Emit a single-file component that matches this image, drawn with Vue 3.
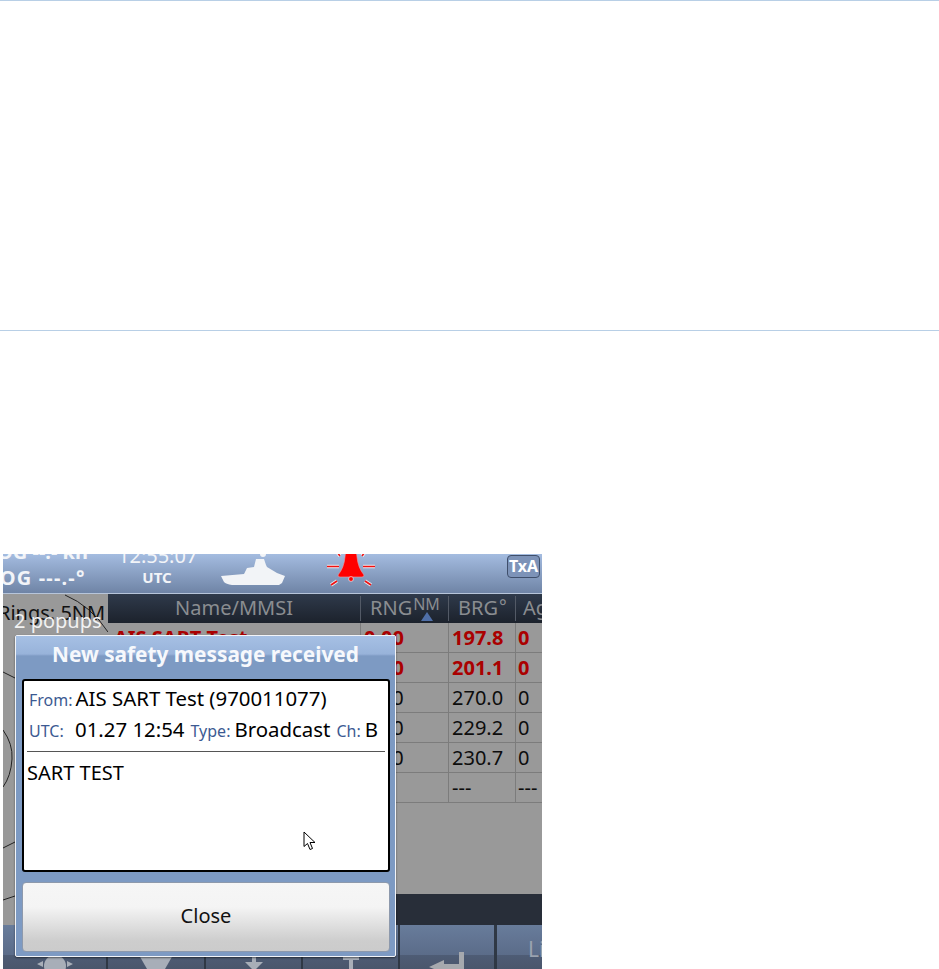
<script setup>
const rows = [
  { rng: '0.00', brg: '197.8', age: '0', alert: true },
  { rng: '0.00', brg: '201.1', age: '0', alert: true },
  { rng: '0.00', brg: '270.0', age: '0' },
  { rng: '0.00', brg: '229.2', age: '0' },
  { rng: '0.00', brg: '230.7', age: '0' },
  { rng: '', brg: '---', age: '---' },
]
</script>

<template>
  <div class="page">
    <section class="blank"></section>
    <section class="shot">
      <div class="device">
        <header class="topbar">
          <div class="nav">
            <div>SOG --.- kn</div>
            <div class="cog">COG ---.-°</div>
          </div>
          <div class="clock">
            <div class="time">12:55:07</div>
            <div class="utc">UTC</div>
          </div>
          <svg class="ship" width="64" height="40" viewBox="0 0 64 40">
            <path d="M0 23 L23 21 L26 15 L33 14 L35 6 L43 6 L45 12 L46 14 L56 20 L64 23 L61 30 L58 32 L11 32 Q5 31 3 29 Z" fill="#f2f4f7"/>
            <circle cx="42" cy="1" r="3" fill="#f2f4f7"/>
          </svg>
          <svg class="bell" width="52" height="40" viewBox="0 0 52 40">
            <g stroke="#fff" stroke-width="3.4" opacity=".8">
              <path d="M2 13.500H14M38 13.500H50M6 32L12 28M46 32L40 28M12 -1L15 3M40 -1L37 3"/>
            </g>
            <g stroke="#f01010" stroke-width="1.600">
              <path d="M2 13.500H14M38 13.500H50M6 32L12 28M46 32L40 28M12 -1L15 3M40 -1L37 3"/>
            </g>
            <path d="M20 4 Q20 -2 26 -2 Q32 -2 32 4 Q33 15 39 22 Q39 24 37 24 L15 24 Q13 24 13 22 Q19 15 20 4 Z" fill="#ff0000" stroke="#e8a0a8" stroke-width=".6"/>
            <circle cx="26" cy="26" r="2.400" fill="#ff0000" stroke="#fff" stroke-width=".6"/>
          </svg>
          <div class="txa">TxA</div>
        </header>

        <div class="middle">
          <div class="map">
            <svg class="map-lines" width="105" height="331" viewBox="0 0 105 331" fill="none" stroke="#222" stroke-width="1">
              <path d="M62 1 Q88 12 105 38"/>
              <path d="M0 78 L12 84"/>
              <path d="M0 136 Q10 150 9 165 Q8 182 0 193"/>
              <path d="M0 254 L12 248"/>
              <path d="M0 306 L12 302"/>
            </svg>
            <div class="rings">Rings: 5NM</div>
          </div>
          <div class="list">
            <div class="thead">
              <div class="c-name">Name/MMSI</div>
              <div class="c-rng">RNG<span class="unit">NM</span><i class="sort"></i></div>
              <div class="c-brg">BRG<span class="deg">°</span></div>
              <div class="c-age">Age</div>
            </div>
            <div v-for="(r, i) in rows" :key="i" class="tr" :class="{ alert: r.alert }">
              <div class="c-name">{{ i === 0 ? 'AIS SART Test' : '' }}</div>
              <div class="c-rng">{{ r.rng }}</div>
              <div class="c-brg">{{ r.brg }}</div>
              <div class="c-age">{{ r.age }}</div>
            </div>
            <div class="rest"></div>
            <div class="darkbar"></div>
          </div>
        </div>

        <div class="toolbar">
          <div class="tool t1">
            <svg width="60" height="22" viewBox="0 0 60 22" fill="#a8aeb8"><circle cx="30" cy="19" r="11"/><path d="M12 17L18 14V20ZM48 17L42 14V20Z"/></svg>
          </div>
          <div class="tool t2">
            <svg width="50" height="22" viewBox="0 0 50 22" fill="#a8aeb8"><path d="M8 8Q25 2 42 8L34 22H16Z"/></svg>
          </div>
          <div class="tool t3">
            <svg width="30" height="22" viewBox="0 0 30 22" fill="#a8aeb8"><path d="M13 2H17V15H24L15 24L6 15H13Z"/></svg>
          </div>
          <div class="tool t4">
            <svg width="30" height="22" viewBox="0 0 30 22" fill="#a8aeb8"><path d="M7 10Q15 8 23 10V13H17V22H13V13H7Z"/></svg>
          </div>
          <div class="tool t5">
            <svg width="48" height="24" viewBox="0 0 48 24" fill="#a6a9ae"><path d="M36 7H41V24H21V28L6 22L21 15V19H36Z"/></svg>
          </div>
          <div class="tool t6">Li</div>
        </div>

        <div class="popups">2 popups</div>

        <div class="dialog">
          <div class="dialog-title">New safety message received</div>
          <div class="msg">
            <div class="msg-row first">
              <span class="lbl from-l">From:</span><span class="val">AIS SART Test (970011077)</span>
            </div>
            <div class="msg-row second">
              <span class="lbl utc-l">UTC:</span><span class="val">01.27 12:54</span>
              <span class="lbl">Type:</span><span class="val">Broadcast</span>
              <span class="lbl">Ch:</span><span class="val">B</span>
            </div>
            <div class="msg-body">SART TEST</div>
            <svg class="cursor" width="14" height="20" viewBox="0 0 14 20">
              <path d="M1 1V15.500L4.500 12.500L7 18.500L9.500 17.500L7 11.500H12Z" fill="#fff" stroke="#000" stroke-width="1"/>
            </svg>
          </div>
          <div class="close-btn">Close</div>
        </div>
      </div>
    </section>
  </div>
</template>

<style scoped>
.page {
  height: 969px;
  overflow: hidden;
  background: #fff;
  font-family: "Noto Sans", "Open Sans", sans-serif;
}
.blank {
  height: 330px;
  box-sizing: border-box;
  border-top: 1px solid #b8cfe6;
}
.shot {
  border-top: 1px solid #b8cfe6;
  padding: 223px 0 0 3px;
}
.device {
  position: relative;
  width: 539px;
  height: 415px;
  overflow: hidden;
  background: #999;
}
.topbar {
  height: 39px;
  border-bottom: 1px solid #b7c5da;
  display: flex;
  align-items: flex-end;
  overflow: hidden;
  background: linear-gradient(#a4bce0, #6f84a6);
  color: #f2f4f8;
}
.nav {
  width: 116px;
  margin-left: -17px;
  flex: none;
  font-weight: 700;
  font-size: 20px;
  line-height: 26px;
  white-space: nowrap;
  padding-bottom: 2px;
}
.cog { letter-spacing: 1.2px; }
.clock {
  width: 78px;
  margin-left: 16px;
  flex: none;
  text-align: center;
  white-space: nowrap;
}
.time { font-size: 20px; line-height: 22px; }
.utc { font-size: 15px; font-weight: 700; line-height: 20px; padding-bottom: 6px; }
.ship { flex: none; margin-left: 25px; }
.bell { flex: none; margin-left: 40px; }
.txa {
  flex: none;
  margin-left: 130px;
  margin-bottom: 15px;
  width: 33px;
  height: 23px;
  box-sizing: border-box;
  border: 1px solid #3f4f6b;
  border-radius: 4px;
  background: #7d93b8;
  text-align: center;
  font-size: 16px;
  font-weight: 700;
  line-height: 20px;
  color: #fff;
}
.middle { display: flex; height: 331px; }
.map {
  position: relative;
  width: 105px;
  flex: none;
  background: #999;
}
.map-lines { position: absolute; left: 0; top: 0; }
.rings {
  position: relative;
  margin-left: -5px;
  font-size: 20px;
  line-height: 27px;
  padding-top: 5px;
  color: #111;
  white-space: nowrap;
}
.list { flex: 1; min-width: 0; display: flex; flex-direction: column; overflow: hidden; }
.thead {
  display: flex;
  height: 29px;
  background: linear-gradient(#2f3a4b, #1c222c);
  color: #8a8d91;
  font-size: 20px;
  flex: none;
}
.thead > div { position: relative; border-right: 1px solid #535a66; margin: 2px 0; box-sizing: border-box; height: 25px; line-height: 24px; }
.c-name { width: 253px; flex: none; text-align: center; box-sizing: border-box; }
.c-rng { width: 88px; flex: none; padding-left: 10px; box-sizing: border-box; white-space: nowrap; }
.c-brg { width: 67px; flex: none; padding-left: 9px; box-sizing: border-box; white-space: nowrap; }
.c-age { width: 40px; flex: none; padding-left: 3px; box-sizing: border-box; white-space: nowrap; }
.thead .c-age { border-right: 0; padding-left: 7px; }
.thead .c-rng { padding-left: 9px; }
.unit { font-size: 16px; position: relative; top: -5px; margin-left: 1px; }
.deg { font-size: 18px; margin-left: 1px; position: relative; top: -2px; }
.sort {
  position: absolute;
  left: 60px;
  top: 16px;
  width: 0;
  height: 0;
  border-left: 6px solid transparent;
  border-right: 6px solid transparent;
  border-bottom: 9px solid #4f6fa8;
}
.tr {
  display: flex;
  height: 30px;
  flex: none;
  box-sizing: border-box;
  border-bottom: 1px solid #7c7c7c;
  font-size: 20px;
  line-height: 29px;
  color: #0d0d0d;
}
.tr > div { border-right: 1px solid #7c7c7c; }
.tr .c-age { border-right: 0; padding-left: 2px; }
.tr .c-brg { padding-left: 3px; }
.tr .c-rng { padding-left: 3px; }
.tr .c-name { text-align: left; padding-left: 6px; }
.tr.alert { color: #aa0000; font-weight: 700; }
.rest { height: 91px; flex: none; }
.darkbar { height: 31px; flex: none; background: #282e39; }
.toolbar {
  display: flex;
  height: 44px;
  background: #444e60;
}
.tool {
  box-sizing: border-box;
  height: 44px;
  flex: none;
  border-right: 2px solid #2f3845;
  background: linear-gradient(#687c9b 0, #5b6c89 30px, #4e5c75 30px, #4a566c 44px);
  display: flex;
  align-items: flex-end;
  justify-content: center;
  overflow: hidden;
  color: #9aa3b0;
}
.t1 { width: 105px; }
.t2 { width: 98px; }
.t3 { width: 97px; }
.t4 { width: 97px; }
.t5 { width: 97px; border-right-width: 3px; }
.t6 { width: 45px; font-size: 21px; line-height: 28px; align-items: flex-start; padding-top: 10px; justify-content: flex-start; padding-left: 31px; border-right: 0; }
.popups {
  position: absolute;
  left: 11px;
  top: 53px;
  font-size: 20px;
  line-height: 27px;
  color: #f1f1f1;
  white-space: nowrap;
}
.dialog {
  position: absolute;
  left: 12px;
  top: 81px;
  width: 381px;
  height: 322px;
  box-sizing: border-box;
  border: 1px solid #f2f4f8;
  border-radius: 2px;
  background: #7d9ac3;
  box-shadow: 0 1px 2px rgba(0, 0, 0, .5);
  padding: 0 5px 0 6px;
}
.dialog-title {
  height: 43px;
  margin: 0 -5px 0 -6px;
  background: linear-gradient(#a6c0e4 0, #98b3da 18px, #7d9ac3 20px, #7d9ac3 43px);
  text-align: center;
  font-size: 20.8px;
  font-weight: 700;
  line-height: 37px;
  color: #f6f8fc;
}
.msg {
  position: relative;
  height: 193px;
  box-sizing: border-box;
  border: 2px solid #000;
  border-radius: 3px;
  background: #fff;
  padding: 0 3px;
  color: #000;
}
.msg-row {
  display: flex;
  align-items: baseline;
  white-space: nowrap;
  font-size: 20.4px;
}
.first { height: 30px; line-height: 34px; }
.second { line-height: 37px; border-bottom: 1px solid #555; box-sizing: border-box; height: 41px; }
.lbl {
  font-size: 16px;
  color: #3c5a92;
  margin: 0 4px 0 0;
}
.from-l { margin: 0 3px 0 2px; }
.utc-l { width: 42px; flex: none; margin: 0 4px 0 2px; }
.val { margin-right: 6px; }
.msg-body { font-size: 20px; line-height: 26px; padding-top: 8px; }
.cursor { position: absolute; left: 279px; top: 150px; }
.close-btn {
  height: 70px;
  margin-top: 10px;
  box-sizing: border-box;
  border: 1px solid #8d99ac;
  border-radius: 4px;
  background: linear-gradient(#f6f6f6 0, #f4f4f4 24px, #cdcdcd 58px, #cbcbcb 70px);
  text-align: center;
  font-size: 20px;
  line-height: 66px;
  color: #111;
}
</style>

<style>
html, body { margin: 0; background: #fff; }
</style>
